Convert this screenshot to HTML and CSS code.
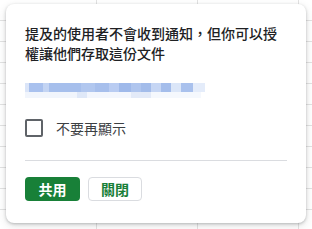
FILE: index.html
```html
<!DOCTYPE html>
<html lang="zh-Hant">
<head>
  <meta charset="UTF-8" />
  <meta name="viewport" content="width=device-width, initial-scale=1.0" />
  <title>共用</title>
  <link rel="stylesheet" href="styles.css">
</head>
<body>

  <div class="dialog">
    <p class="dialog-title">提及的使用者不會收到通知，但你可以授權讓他們存取這份文件</p>

    <div class="email" aria-label="email">
      <div class="email-row">
        <span style="width:4px;background:#dbe5f8"></span>
        <span style="width:14px;background:#a9c1ee"></span>
        <span style="width:6px;background:#c3d4f3"></span>
        <span style="width:32px;background:#a6bfec"></span>
        <span style="width:14px;background:#b1c7ef"></span>
        <span style="width:14px;background:#a7bfec"></span>
        <span style="width:10px;background:#b9ccf2"></span>
        <span style="width:12px;background:#9fb9ea"></span>
        <span style="width:10px;background:#afc5ee"></span>
        <span style="width:10px;background:#a3bcea"></span>
        <span style="width:10px;background:#c6d6f4"></span>
        <span style="width:10px;background:#a4bdeb"></span>
        <span style="width:10px;background:#dbe6f8"></span>
        <span style="width:12px;background:#a9c1ed"></span>
        <span style="width:12px;background:#e4ecfa"></span>
      </div>
      <div class="email-row faint">
        <span style="width:52px;background:#f1f5fc"></span>
        <span style="width:10px;background:#dfe8f8"></span>
        <span style="width:44px;background:#f3f6fd"></span>
        <span style="width:20px;background:#e3eaf8"></span>
        <span style="width:50px;background:#f5f8fd"></span>
      </div>
    </div>

    <label class="check">
      <span class="box"></span>
      <span>不要再顯示</span>
    </label>

    <hr class="divider">

    <div class="actions">
      <button class="btn btn-primary">共用</button>
      <button class="btn btn-outline">關閉</button>
    </div>
  </div>

</body>
</html>
```

FILE: styles.css
```css
body {
  margin: 0;
  width: 312px;
  height: 229px;
  overflow: hidden;
  font-family: "Noto Sans CJK TC", "Noto Sans", sans-serif;
  background-color: #ffffff;
  background-image:
    linear-gradient(to right, #e2e2e2 1px, transparent 1px),
    linear-gradient(to bottom, #e2e2e2 1px, transparent 1px);
  background-size: 101px 100%, 100% 21px;
  background-position: 96px 0, 0 20px;
}

.dialog {
  box-sizing: border-box;
  width: 300px;
  height: 219px;
  margin: 4px 0 0 6px;
  padding: 19px 19px 0 19px;
  background: #ffffff;
  border-radius: 8px;
  box-shadow: 0 1px 3px rgba(60, 64, 67, 0.3), 0 3px 8px rgba(60, 64, 67, 0.15);
}

.dialog-title {
  margin: 0;
  font-size: 14px;
  line-height: 20px;
  font-weight: 500;
  color: #202124;
}

.email {
  margin: 20px 0 0 0;
  height: 16px;
  filter: blur(0.5px);
}

.email-row {
  display: flex;
  height: 9px;
}

.email-row.faint {
  height: 6px;
}

.email-row span {
  display: block;
  height: 100%;
}

.check {
  display: flex;
  align-items: center;
  gap: 13px;
  margin-top: 19px;
  font-size: 14px;
  color: #3c4043;
}

.box {
  box-sizing: border-box;
  width: 18px;
  height: 18px;
  border: 2px solid #5f6368;
  border-radius: 2px;
}

.divider {
  margin: 22px 0 0 0;
  border: none;
  border-top: 1px solid #dadce0;
}

.actions {
  display: flex;
  gap: 8px;
  margin-top: 16px;
}

.btn {
  height: 24px;
  padding: 0;
  font-family: inherit;
  font-size: 14px;
  font-weight: 700;
  border-radius: 4px;
  cursor: pointer;
}

.btn-primary {
  width: 55px;
  background: #188038;
  color: #ffffff;
  border: none;
}

.btn-outline {
  width: 54px;
  background: #ffffff;
  color: #188038;
  border: 1px solid #dadce0;
}
```
